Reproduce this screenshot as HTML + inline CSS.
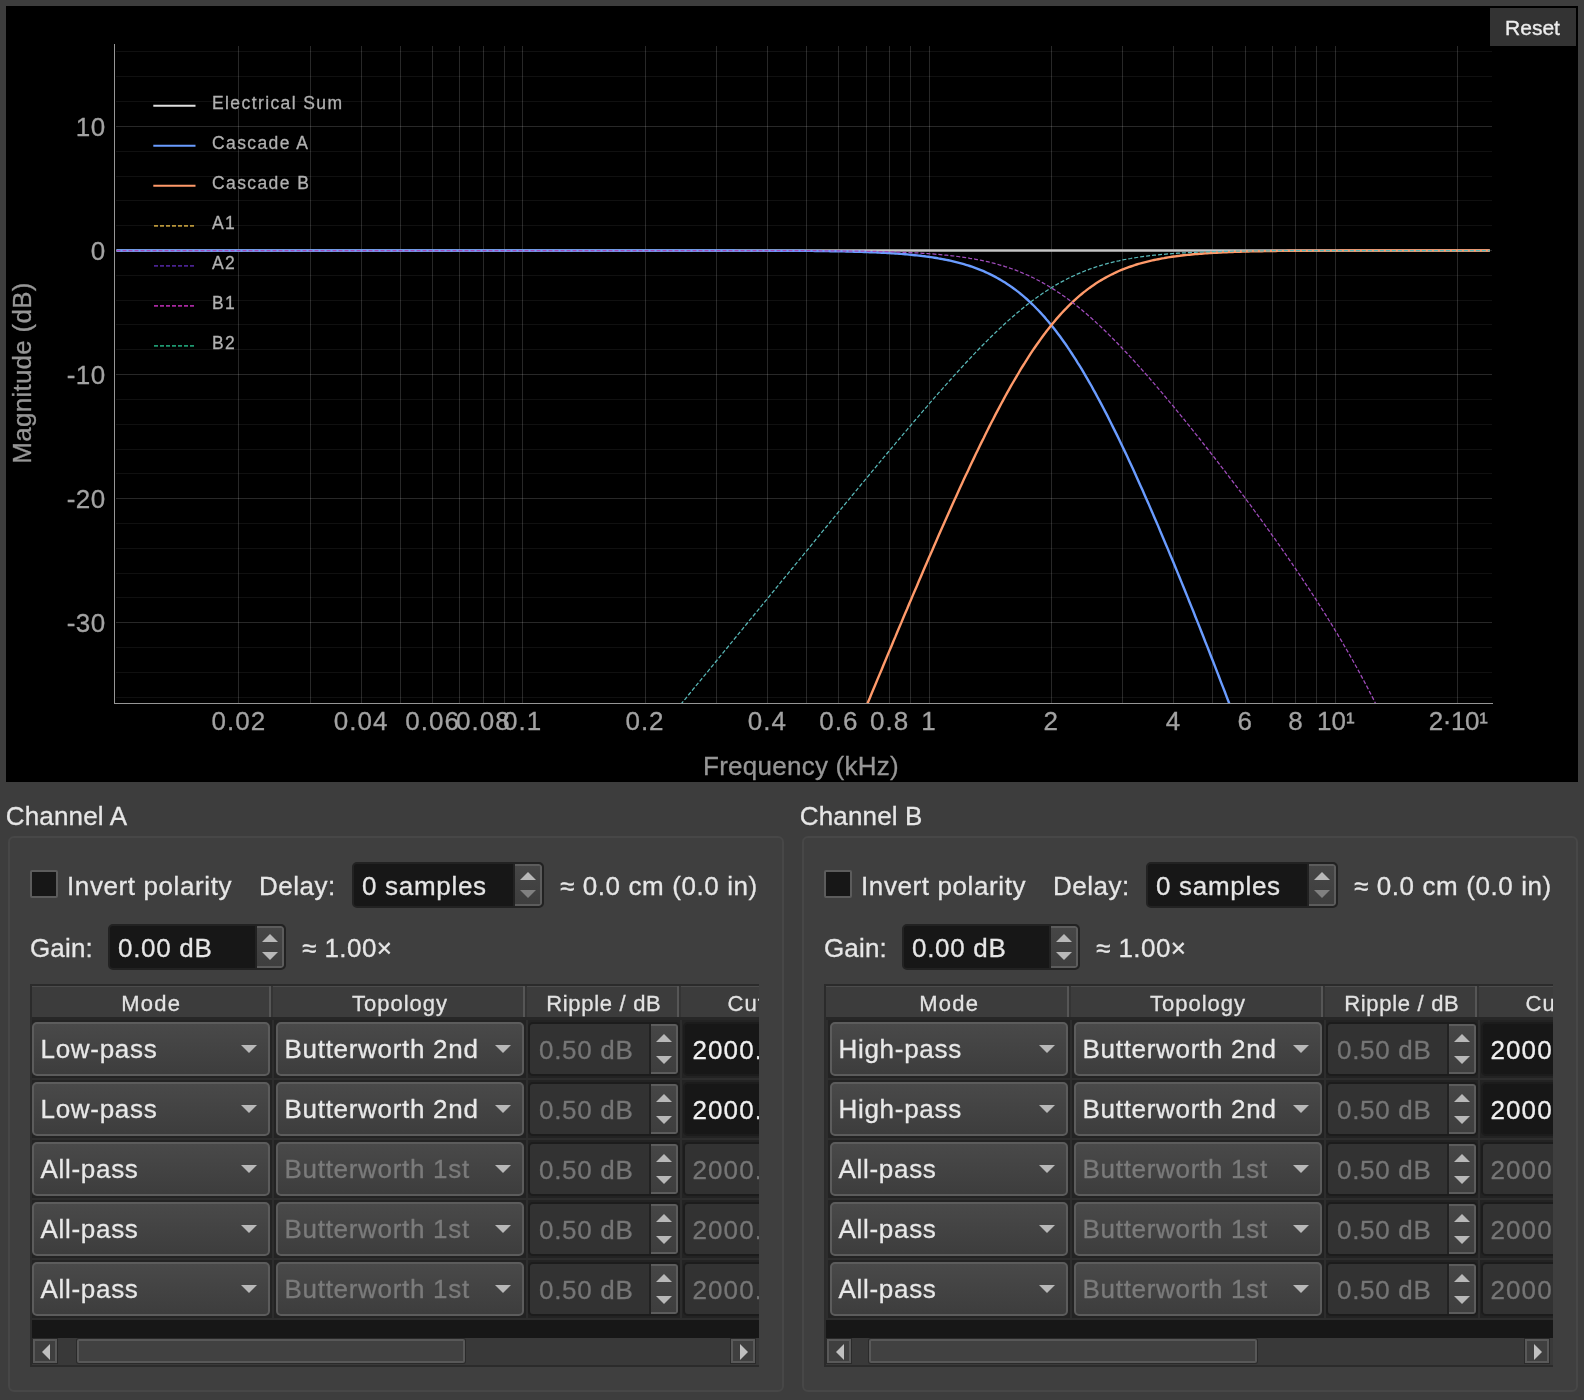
<!DOCTYPE html>
<html lang="en"><head><meta charset="utf-8"><title>Crossover</title>
<style>
*{box-sizing:border-box;margin:0;padding:0}
html,body{width:1584px;height:1400px;overflow:hidden;background:#3d3d3d}
body{position:relative;will-change:transform;font-family:"Liberation Sans",sans-serif;color:#e4e4e4;font-size:26px}
.plot{position:absolute;left:6px;top:6px}
.plot text{font-family:"Liberation Sans",sans-serif;stroke:currentColor;stroke-width:0.3px}
.tk{color:#a2a2a2}.al{color:#969696}.lg{color:#b0b0b0}
.tk{font-size:26px;fill:#a2a2a2;letter-spacing:0.4px}
.tkx{letter-spacing:1px}
.al{font-size:26px;fill:#969696;letter-spacing:0.25px}
.lg{font-size:17.5px;fill:#b0b0b0;letter-spacing:1.4px}
.reset{position:absolute;left:1490px;top:8px;width:86px;height:38px;background:#333;color:#ececec;font-size:21px;line-height:39px;text-align:center;text-indent:-1px;letter-spacing:0;-webkit-text-stroke:0.35px #ececec}
.gtitle{position:absolute;font-size:26px;line-height:30px;white-space:nowrap;color:#e6e6e6}
.gframe{position:absolute;border:2px solid #474747;border-radius:6px;background:#3f3f3f}
.lbl{position:absolute;font-size:26px;line-height:30px;white-space:nowrap;color:#e6e6e6;letter-spacing:0.45px}
.cb{position:absolute;width:28px;height:28px;background:#171717;border:2px solid #5c5c5c;border-radius:2px}
.spin{position:absolute;background:#171717;border:2px solid #222;border-radius:5px;overflow:hidden}
.spin .sv{position:absolute;top:2px;bottom:0;display:flex;align-items:center;white-space:nowrap;color:#e6e6e6;letter-spacing:0.7px}
.spin .sb{position:absolute;right:0;top:0;bottom:0;background:linear-gradient(#464646,#3e3e3e);border:2px solid #5c5c5c;border-left:none;border-radius:0 3px 3px 0;box-shadow:-2px 0 0 #222}
.spin .up,.spin .dn{position:absolute;left:5px;width:0;height:0;border-left:8px solid transparent;border-right:8px solid transparent}
.spin .up{border-bottom:8px solid #b8b8b8}
.spin .dn{border-top:8px solid #b8b8b8}
.spin.min .dn{border-top-color:#808080}
.spin.dis{background:#323232;border-color:#1c1c1c}
.spin.dis .sv{color:#767676}
.table{position:absolute;background:#232323;border:2px solid #2b2b2b;border-right:none;overflow:hidden}
.table>*{position:absolute}
.thead{left:0;top:0;right:0;height:34px;background:#3c3c3c;border-top:1.5px solid #4c4c4c;border-bottom:3px solid #272727}
.th{top:0;height:33px;line-height:36px;text-indent:0;text-align:center;font-size:22px;color:#e2e2e2;letter-spacing:1px;white-space:nowrap;overflow:hidden}
.thsep{top:0;width:2px;height:31px;background:#565656}
.thsep2{top:0;width:2px;height:31px;background:#343434}
.hl{left:0;right:0;height:2px;background:#2d2d2d}
.vl{top:34px;width:2px;height:300px;background:#2d2d2d}
.combo{background:linear-gradient(#494949,#3d3d3d);border:2px solid #5c5c5c;border-radius:5px}
.combo span{position:absolute;left:6.5px;top:1px;bottom:0;display:flex;align-items:center;white-space:nowrap;color:#e8e8e8;letter-spacing:0.7px}
.combo.dis span{color:#7b7b7b}
.combo .ar{position:absolute;right:11px;top:50%;margin-top:-4px;width:0;height:0;border-left:8px solid transparent;border-right:8px solid transparent;border-top:8px solid #b8b8b8}
.cut{background:#171717;border:2px solid #1c1c1c;border-radius:5px;overflow:hidden}
.cut span{position:absolute;left:7.5px;top:2px;bottom:0;display:flex;align-items:center;color:#f0f0f0;letter-spacing:1.1px;white-space:nowrap}
.cut.dis{background:#323232}
.cut.dis span{color:#767676}
.gtitle,.lbl,.sv,.combo span,.cut span,.th{-webkit-text-stroke:0.3px currentColor}
.dark{left:0;right:0;top:334px;height:18px;background:#171717}
.sbar{left:0;right:0;top:352px;height:27px;background:#393939}
.sbar>*{position:absolute}
.sbtn{top:1px;width:24px;height:24px;border:2px solid #595959;background:#3f3f3f;box-shadow:0 0 0 1px #2a2a2a}
.sbtn.l{left:1px}.sbtn.r{right:4px}
.sbtn i{position:absolute;top:3px;width:0;height:0;border-top:8px solid transparent;border-bottom:8px solid transparent}
.sbtn.l i{left:7px;border-right:8px solid #c0c0c0}
.sbtn.r i{left:7px;border-left:8px solid #c0c0c0}
.shandle{top:1px;height:24px;background:#414141;border:2px solid #585858;border-radius:2px;box-shadow:0 0 0 1px #2a2a2a}
</style></head>
<body>
<svg class="plot" width="1572" height="776" viewBox="6 6 1572 776">
<defs><clipPath id="vb"><rect x="115" y="45" width="1377" height="658"/></clipPath></defs>
<rect x="6" y="6" width="1572" height="776" fill="#000"/>
<g stroke="#fff" stroke-opacity="0.158" stroke-width="1"><line x1="238.5" x2="238.5" y1="46" y2="703"/><line x1="310.5" x2="310.5" y1="46" y2="703"/><line x1="361.5" x2="361.5" y1="46" y2="703"/><line x1="400.5" x2="400.5" y1="46" y2="703"/><line x1="432.5" x2="432.5" y1="46" y2="703"/><line x1="459.5" x2="459.5" y1="46" y2="703"/><line x1="483.5" x2="483.5" y1="46" y2="703"/><line x1="504.5" x2="504.5" y1="46" y2="703"/><line x1="522.5" x2="522.5" y1="46" y2="703"/><line x1="645.5" x2="645.5" y1="46" y2="703"/><line x1="716.5" x2="716.5" y1="46" y2="703"/><line x1="767.5" x2="767.5" y1="46" y2="703"/><line x1="806.5" x2="806.5" y1="46" y2="703"/><line x1="838.5" x2="838.5" y1="46" y2="703"/><line x1="866.5" x2="866.5" y1="46" y2="703"/><line x1="889.5" x2="889.5" y1="46" y2="703"/><line x1="910.5" x2="910.5" y1="46" y2="703"/><line x1="929.5" x2="929.5" y1="46" y2="703"/><line x1="1051.5" x2="1051.5" y1="46" y2="703"/><line x1="1122.5" x2="1122.5" y1="46" y2="703"/><line x1="1173.5" x2="1173.5" y1="46" y2="703"/><line x1="1212.5" x2="1212.5" y1="46" y2="703"/><line x1="1245.5" x2="1245.5" y1="46" y2="703"/><line x1="1272.5" x2="1272.5" y1="46" y2="703"/><line x1="1295.5" x2="1295.5" y1="46" y2="703"/><line x1="1316.5" x2="1316.5" y1="46" y2="703"/><line x1="1335.5" x2="1335.5" y1="46" y2="703"/><line x1="1457.5" x2="1457.5" y1="46" y2="703"/></g>
<g stroke="#fff" stroke-opacity="0.062" stroke-width="1"><line x1="116" x2="1492" y1="697.5" y2="697.5"/><line x1="116" x2="1492" y1="672.5" y2="672.5"/><line x1="116" x2="1492" y1="647.5" y2="647.5"/><line x1="116" x2="1492" y1="597.5" y2="597.5"/><line x1="116" x2="1492" y1="573.5" y2="573.5"/><line x1="116" x2="1492" y1="548.5" y2="548.5"/><line x1="116" x2="1492" y1="523.5" y2="523.5"/><line x1="116" x2="1492" y1="473.5" y2="473.5"/><line x1="116" x2="1492" y1="449.5" y2="449.5"/><line x1="116" x2="1492" y1="424.5" y2="424.5"/><line x1="116" x2="1492" y1="399.5" y2="399.5"/><line x1="116" x2="1492" y1="349.5" y2="349.5"/><line x1="116" x2="1492" y1="324.5" y2="324.5"/><line x1="116" x2="1492" y1="300.5" y2="300.5"/><line x1="116" x2="1492" y1="275.5" y2="275.5"/><line x1="116" x2="1492" y1="225.5" y2="225.5"/><line x1="116" x2="1492" y1="200.5" y2="200.5"/><line x1="116" x2="1492" y1="176.5" y2="176.5"/><line x1="116" x2="1492" y1="151.5" y2="151.5"/><line x1="116" x2="1492" y1="101.5" y2="101.5"/><line x1="116" x2="1492" y1="76.5" y2="76.5"/><line x1="116" x2="1492" y1="51.5" y2="51.5"/></g>
<g stroke="#fff" stroke-opacity="0.158" stroke-width="1"><line x1="116" x2="1492" y1="622.5" y2="622.5"/><line x1="116" x2="1492" y1="498.5" y2="498.5"/><line x1="116" x2="1492" y1="374.5" y2="374.5"/><line x1="116" x2="1492" y1="250.5" y2="250.5"/><line x1="116" x2="1492" y1="126.5" y2="126.5"/></g>
<g clip-path="url(#vb)" fill="none">
<path d="M116.5 250.6 L1489.8 250.6" stroke="#c4c4c4" stroke-width="2.5"/>
<path d="M116.5 250.5 L118.4 250.5 L120.4 250.5 L122.3 250.5 L124.3 250.5 L126.3 250.5 L128.2 250.5 L130.2 250.5 L132.2 250.5 L134.1 250.5 L136.1 250.5 L138.0 250.5 L140.0 250.5 L142.0 250.5 L143.9 250.5 L145.9 250.5 L147.8 250.5 L149.8 250.5 L151.8 250.5 L153.7 250.5 L155.7 250.5 L157.7 250.5 L159.6 250.5 L161.6 250.5 L163.5 250.5 L165.5 250.5 L167.5 250.5 L169.4 250.5 L171.4 250.5 L173.4 250.5 L175.3 250.5 L177.3 250.5 L179.2 250.5 L181.2 250.5 L183.2 250.5 L185.1 250.5 L187.1 250.5 L189.0 250.5 L191.0 250.5 L193.0 250.5 L194.9 250.5 L196.9 250.5 L198.9 250.5 L200.8 250.5 L202.8 250.5 L204.7 250.5 L206.7 250.5 L208.7 250.5 L210.6 250.5 L212.6 250.5 L214.5 250.5 L216.5 250.5 L218.5 250.5 L220.4 250.5 L222.4 250.5 L224.4 250.5 L226.3 250.5 L228.3 250.5 L230.2 250.5 L232.2 250.5 L234.2 250.5 L236.1 250.5 L238.1 250.5 L240.1 250.5 L242.0 250.5 L244.0 250.5 L245.9 250.5 L247.9 250.5 L249.9 250.5 L251.8 250.5 L253.8 250.5 L255.7 250.5 L257.7 250.5 L259.7 250.5 L261.6 250.5 L263.6 250.5 L265.6 250.5 L267.5 250.5 L269.5 250.5 L271.4 250.5 L273.4 250.5 L275.4 250.5 L277.3 250.5 L279.3 250.5 L281.2 250.5 L283.2 250.5 L285.2 250.5 L287.1 250.5 L289.1 250.5 L291.1 250.5 L293.0 250.5 L295.0 250.5 L296.9 250.5 L298.9 250.5 L300.9 250.5 L302.8 250.5 L304.8 250.5 L306.8 250.5 L308.7 250.5 L310.7 250.5 L312.6 250.5 L314.6 250.5 L316.6 250.5 L318.5 250.5 L320.5 250.5 L322.4 250.5 L324.4 250.5 L326.4 250.5 L328.3 250.5 L330.3 250.5 L332.3 250.5 L334.2 250.5 L336.2 250.5 L338.1 250.5 L340.1 250.5 L342.1 250.5 L344.0 250.5 L346.0 250.5 L347.9 250.5 L349.9 250.5 L351.9 250.5 L353.8 250.5 L355.8 250.5 L357.8 250.5 L359.7 250.5 L361.7 250.5 L363.6 250.5 L365.6 250.5 L367.6 250.5 L369.5 250.5 L371.5 250.5 L373.5 250.5 L375.4 250.5 L377.4 250.5 L379.3 250.5 L381.3 250.5 L383.3 250.5 L385.2 250.5 L387.2 250.5 L389.1 250.5 L391.1 250.5 L393.1 250.5 L395.0 250.5 L397.0 250.5 L399.0 250.5 L400.9 250.5 L402.9 250.5 L404.8 250.5 L406.8 250.5 L408.8 250.5 L410.7 250.5 L412.7 250.5 L414.6 250.5 L416.6 250.5 L418.6 250.5 L420.5 250.5 L422.5 250.5 L424.5 250.5 L426.4 250.5 L428.4 250.5 L430.3 250.5 L432.3 250.5 L434.3 250.5 L436.2 250.5 L438.2 250.5 L440.2 250.5 L442.1 250.5 L444.1 250.5 L446.0 250.5 L448.0 250.5 L450.0 250.5 L451.9 250.5 L453.9 250.5 L455.8 250.5 L457.8 250.5 L459.8 250.5 L461.7 250.5 L463.7 250.5 L465.7 250.5 L467.6 250.5 L469.6 250.5 L471.5 250.5 L473.5 250.5 L475.5 250.5 L477.4 250.5 L479.4 250.5 L481.3 250.5 L483.3 250.5 L485.3 250.5 L487.2 250.5 L489.2 250.5 L491.2 250.5 L493.1 250.5 L495.1 250.5 L497.0 250.5 L499.0 250.5 L501.0 250.5 L502.9 250.5 L504.9 250.5 L506.9 250.5 L508.8 250.5 L510.8 250.5 L512.7 250.5 L514.7 250.5 L516.7 250.5 L518.6 250.5 L520.6 250.5 L522.5 250.5 L524.5 250.5 L526.5 250.5 L528.4 250.5 L530.4 250.5 L532.4 250.5 L534.3 250.5 L536.3 250.5 L538.2 250.5 L540.2 250.5 L542.2 250.5 L544.1 250.5 L546.1 250.5 L548.0 250.5 L550.0 250.5 L552.0 250.5 L553.9 250.5 L555.9 250.5 L557.9 250.5 L559.8 250.5 L561.8 250.5 L563.7 250.5 L565.7 250.5 L567.7 250.5 L569.6 250.5 L571.6 250.5 L573.6 250.5 L575.5 250.5 L577.5 250.5 L579.4 250.5 L581.4 250.5 L583.4 250.5 L585.3 250.5 L587.3 250.5 L589.2 250.5 L591.2 250.5 L593.2 250.5 L595.1 250.5 L597.1 250.5 L599.1 250.5 L601.0 250.5 L603.0 250.5 L604.9 250.5 L606.9 250.5 L608.9 250.5 L610.8 250.5 L612.8 250.5 L614.7 250.5 L616.7 250.5 L618.7 250.5 L620.6 250.5 L622.6 250.5 L624.6 250.5 L626.5 250.5 L628.5 250.5 L630.4 250.5 L632.4 250.5 L634.4 250.5 L636.3 250.5 L638.3 250.5 L640.3 250.5 L642.2 250.5 L644.2 250.5 L646.1 250.5 L648.1 250.5 L650.1 250.5 L652.0 250.5 L654.0 250.5 L655.9 250.5 L657.9 250.5 L659.9 250.5 L661.8 250.5 L663.8 250.5 L665.8 250.5 L667.7 250.5 L669.7 250.5 L671.6 250.5 L673.6 250.5 L675.6 250.5 L677.5 250.5 L679.5 250.5 L681.4 250.5 L683.4 250.5 L685.4 250.5 L687.3 250.5 L689.3 250.5 L691.3 250.5 L693.2 250.5 L695.2 250.5 L697.1 250.5 L699.1 250.5 L701.1 250.5 L703.0 250.5 L705.0 250.5 L707.0 250.5 L708.9 250.5 L710.9 250.5 L712.8 250.5 L714.8 250.5 L716.8 250.5 L718.7 250.5 L720.7 250.5 L722.6 250.5 L724.6 250.5 L726.6 250.5 L728.5 250.5 L730.5 250.5 L732.5 250.5 L734.4 250.5 L736.4 250.6 L738.3 250.6 L740.3 250.6 L742.3 250.6 L744.2 250.6 L746.2 250.6 L748.1 250.6 L750.1 250.6 L752.1 250.6 L754.0 250.6 L756.0 250.6 L758.0 250.6 L759.9 250.6 L761.9 250.6 L763.8 250.6 L765.8 250.6 L767.8 250.6 L769.7 250.6 L771.7 250.7 L773.7 250.7 L775.6 250.7 L777.6 250.7 L779.5 250.7 L781.5 250.7 L783.5 250.7 L785.4 250.7 L787.4 250.7 L789.3 250.7 L791.3 250.8 L793.3 250.8 L795.2 250.8 L797.2 250.8 L799.2 250.8 L801.1 250.8 L803.1 250.8 L805.0 250.9 L807.0 250.9 L809.0 250.9 L810.9 250.9 L812.9 250.9 L814.8 251.0 L816.8 251.0 L818.8 251.0 L820.7 251.0 L822.7 251.1 L824.7 251.1 L826.6 251.1 L828.6 251.1 L830.5 251.2 L832.5 251.2 L834.5 251.2 L836.4 251.3 L838.4 251.3 L840.4 251.4 L842.3 251.4 L844.3 251.4 L846.2 251.5 L848.2 251.5 L850.2 251.6 L852.1 251.6 L854.1 251.7 L856.0 251.7 L858.0 251.8 L860.0 251.8 L861.9 251.9 L863.9 252.0 L865.9 252.0 L867.8 252.1 L869.8 252.2 L871.7 252.3 L873.7 252.3 L875.7 252.4 L877.6 252.5 L879.6 252.6 L881.6 252.7 L883.5 252.8 L885.5 252.9 L887.4 253.0 L889.4 253.1 L891.4 253.2 L893.3 253.4 L895.3 253.5 L897.2 253.6 L899.2 253.8 L901.2 253.9 L903.1 254.1 L905.1 254.2 L907.1 254.4 L909.0 254.6 L911.0 254.8 L912.9 255.0 L914.9 255.2 L916.9 255.4 L918.8 255.6 L920.8 255.8 L922.7 256.1 L924.7 256.3 L926.7 256.6 L928.6 256.8 L930.6 257.1 L932.6 257.4 L934.5 257.7 L936.5 258.0 L938.4 258.4 L940.4 258.7 L942.4 259.1 L944.3 259.5 L946.3 259.9 L948.3 260.3 L950.2 260.7 L952.2 261.1 L954.1 261.6 L956.1 262.1 L958.1 262.6 L960.0 263.1 L962.0 263.6 L963.9 264.2 L965.9 264.8 L967.9 265.4 L969.8 266.0 L971.8 266.7 L973.8 267.4 L975.7 268.1 L977.7 268.8 L979.6 269.6 L981.6 270.4 L983.6 271.2 L985.5 272.1 L987.5 273.0 L989.4 273.9 L991.4 274.9 L993.4 275.9 L995.3 276.9 L997.3 278.0 L999.3 279.1 L1001.2 280.2 L1003.2 281.4 L1005.1 282.6 L1007.1 283.9 L1009.1 285.2 L1011.0 286.6 L1013.0 288.0 L1015.0 289.4 L1016.9 290.9 L1018.9 292.4 L1020.8 294.0 L1022.8 295.6 L1024.8 297.3 L1026.7 299.0 L1028.7 300.8 L1030.6 302.7 L1032.6 304.5 L1034.6 306.5 L1036.5 308.5 L1038.5 310.5 L1040.5 312.6 L1042.4 314.7 L1044.4 316.9 L1046.3 319.2 L1048.3 321.5 L1050.3 323.9 L1052.2 326.3 L1054.2 328.8 L1056.1 331.3 L1058.1 333.9 L1060.1 336.5 L1062.0 339.2 L1064.0 342.0 L1066.0 344.8 L1067.9 347.7 L1069.9 350.6 L1071.8 353.5 L1073.8 356.6 L1075.8 359.6 L1077.7 362.8 L1079.7 365.9 L1081.7 369.2 L1083.6 372.4 L1085.6 375.8 L1087.5 379.1 L1089.5 382.6 L1091.5 386.0 L1093.4 389.6 L1095.4 393.1 L1097.3 396.7 L1099.3 400.4 L1101.3 404.1 L1103.2 407.8 L1105.2 411.6 L1107.2 415.4 L1109.1 419.3 L1111.1 423.2 L1113.0 427.1 L1115.0 431.1 L1117.0 435.1 L1118.9 439.1 L1120.9 443.2 L1122.8 447.3 L1124.8 451.4 L1126.8 455.6 L1128.7 459.8 L1130.7 464.1 L1132.7 468.3 L1134.6 472.6 L1136.6 476.9 L1138.5 481.3 L1140.5 485.7 L1142.5 490.1 L1144.4 494.5 L1146.4 499.0 L1148.4 503.4 L1150.3 507.9 L1152.3 512.4 L1154.2 517.0 L1156.2 521.6 L1158.2 526.1 L1160.1 530.8 L1162.1 535.4 L1164.0 540.0 L1166.0 544.7 L1168.0 549.4 L1169.9 554.1 L1171.9 558.8 L1173.9 563.5 L1175.8 568.3 L1177.8 573.1 L1179.7 577.8 L1181.7 582.6 L1183.7 587.5 L1185.6 592.3 L1187.6 597.1 L1189.5 602.0 L1191.5 606.9 L1193.5 611.8 L1195.4 616.7 L1197.4 621.6 L1199.4 626.6 L1201.3 631.5 L1203.3 636.5 L1205.2 641.5 L1207.2 646.4 L1209.2 651.5 L1211.1 656.5 L1213.1 661.5 L1215.1 666.6 L1217.0 671.6 L1219.0 676.7 L1220.9 681.8 L1222.9 686.9 L1224.9 692.0 L1226.8 697.1 L1228.8 702.3 L1230.7 707.4 L1232.7 712.6 L1234.7 717.8 L1236.6 723.0 L1238.6 728.2" stroke="#6a9cff" stroke-width="2.4"/>
<path d="M856.0 731.1 L858.0 726.4 L860.0 721.6 L861.9 716.9 L863.9 712.2 L865.9 707.4 L867.8 702.7 L869.8 698.0 L871.7 693.2 L873.7 688.5 L875.7 683.8 L877.6 679.1 L879.6 674.4 L881.6 669.7 L883.5 665.0 L885.5 660.3 L887.4 655.6 L889.4 650.9 L891.4 646.2 L893.3 641.5 L895.3 636.9 L897.2 632.2 L899.2 627.5 L901.2 622.9 L903.1 618.2 L905.1 613.6 L907.1 609.0 L909.0 604.3 L911.0 599.7 L912.9 595.1 L914.9 590.5 L916.9 585.9 L918.8 581.3 L920.8 576.7 L922.7 572.2 L924.7 567.6 L926.7 563.0 L928.6 558.5 L930.6 554.0 L932.6 549.5 L934.5 545.0 L936.5 540.5 L938.4 536.0 L940.4 531.5 L942.4 527.1 L944.3 522.7 L946.3 518.2 L948.3 513.8 L950.2 509.5 L952.2 505.1 L954.1 500.7 L956.1 496.4 L958.1 492.1 L960.0 487.8 L962.0 483.5 L963.9 479.3 L965.9 475.1 L967.9 470.9 L969.8 466.7 L971.8 462.5 L973.8 458.4 L975.7 454.3 L977.7 450.2 L979.6 446.2 L981.6 442.1 L983.6 438.2 L985.5 434.2 L987.5 430.3 L989.4 426.4 L991.4 422.5 L993.4 418.7 L995.3 414.9 L997.3 411.1 L999.3 407.4 L1001.2 403.7 L1003.2 400.1 L1005.1 396.5 L1007.1 392.9 L1009.1 389.4 L1011.0 385.9 L1013.0 382.5 L1015.0 379.1 L1016.9 375.8 L1018.9 372.5 L1020.8 369.2 L1022.8 366.0 L1024.8 362.9 L1026.7 359.8 L1028.7 356.7 L1030.6 353.7 L1032.6 350.7 L1034.6 347.8 L1036.5 345.0 L1038.5 342.2 L1040.5 339.4 L1042.4 336.7 L1044.4 334.1 L1046.3 331.5 L1048.3 329.0 L1050.3 326.5 L1052.2 324.1 L1054.2 321.7 L1056.1 319.4 L1058.1 317.1 L1060.1 314.9 L1062.0 312.8 L1064.0 310.6 L1066.0 308.6 L1067.9 306.6 L1069.9 304.6 L1071.8 302.8 L1073.8 300.9 L1075.8 299.1 L1077.7 297.4 L1079.7 295.7 L1081.7 294.0 L1083.6 292.4 L1085.6 290.9 L1087.5 289.4 L1089.5 287.9 L1091.5 286.5 L1093.4 285.2 L1095.4 283.8 L1097.3 282.6 L1099.3 281.3 L1101.3 280.1 L1103.2 279.0 L1105.2 277.9 L1107.2 276.8 L1109.1 275.7 L1111.1 274.7 L1113.0 273.8 L1115.0 272.8 L1117.0 271.9 L1118.9 271.0 L1120.9 270.2 L1122.8 269.4 L1124.8 268.6 L1126.8 267.9 L1128.7 267.2 L1130.7 266.5 L1132.7 265.8 L1134.6 265.2 L1136.6 264.5 L1138.5 263.9 L1140.5 263.4 L1142.5 262.8 L1144.4 262.3 L1146.4 261.8 L1148.4 261.3 L1150.3 260.8 L1152.3 260.4 L1154.2 260.0 L1156.2 259.6 L1158.2 259.2 L1160.1 258.8 L1162.1 258.4 L1164.0 258.1 L1166.0 257.7 L1168.0 257.4 L1169.9 257.1 L1171.9 256.8 L1173.9 256.5 L1175.8 256.3 L1177.8 256.0 L1179.7 255.8 L1181.7 255.5 L1183.7 255.3 L1185.6 255.1 L1187.6 254.9 L1189.5 254.7 L1191.5 254.5 L1193.5 254.3 L1195.4 254.1 L1197.4 254.0 L1199.4 253.8 L1201.3 253.7 L1203.3 253.5 L1205.2 253.4 L1207.2 253.2 L1209.2 253.1 L1211.1 253.0 L1213.1 252.9 L1215.1 252.8 L1217.0 252.7 L1219.0 252.6 L1220.9 252.5 L1222.9 252.4 L1224.9 252.3 L1226.8 252.2 L1228.8 252.1 L1230.7 252.0 L1232.7 252.0 L1234.7 251.9 L1236.6 251.8 L1238.6 251.8 L1240.6 251.7 L1242.5 251.6 L1244.5 251.6 L1246.4 251.5 L1248.4 251.5 L1250.4 251.4 L1252.3 251.4 L1254.3 251.3 L1256.2 251.3 L1258.2 251.3 L1260.2 251.2 L1262.1 251.2 L1264.1 251.1 L1266.1 251.1 L1268.0 251.1 L1270.0 251.1 L1271.9 251.0 L1273.9 251.0 L1275.9 251.0 L1277.8 250.9 L1279.8 250.9 L1281.8 250.9 L1283.7 250.9 L1285.7 250.9 L1287.6 250.8 L1289.6 250.8 L1291.6 250.8 L1293.5 250.8 L1295.5 250.8 L1297.4 250.7 L1299.4 250.7 L1301.4 250.7 L1303.3 250.7 L1305.3 250.7 L1307.3 250.7 L1309.2 250.7 L1311.2 250.7 L1313.1 250.6 L1315.1 250.6 L1317.1 250.6 L1319.0 250.6 L1321.0 250.6 L1322.9 250.6 L1324.9 250.6 L1326.9 250.6 L1328.8 250.6 L1330.8 250.6 L1332.8 250.6 L1334.7 250.6 L1336.7 250.6 L1338.6 250.6 L1340.6 250.5 L1342.6 250.5 L1344.5 250.5 L1346.5 250.5 L1348.5 250.5 L1350.4 250.5 L1352.4 250.5 L1354.3 250.5 L1356.3 250.5 L1358.3 250.5 L1360.2 250.5 L1362.2 250.5 L1364.1 250.5 L1366.1 250.5 L1368.1 250.5 L1370.0 250.5 L1372.0 250.5 L1374.0 250.5 L1375.9 250.5 L1377.9 250.5 L1379.8 250.5 L1381.8 250.5 L1383.8 250.5 L1385.7 250.5 L1387.7 250.5 L1389.6 250.5 L1391.6 250.5 L1393.6 250.5 L1395.5 250.5 L1397.5 250.5 L1399.5 250.5 L1401.4 250.5 L1403.4 250.5 L1405.3 250.5 L1407.3 250.5 L1409.3 250.5 L1411.2 250.5 L1413.2 250.5 L1415.2 250.5 L1417.1 250.5 L1419.1 250.5 L1421.0 250.5 L1423.0 250.5 L1425.0 250.5 L1426.9 250.5 L1428.9 250.5 L1430.8 250.5 L1432.8 250.5 L1434.8 250.5 L1436.7 250.5 L1438.7 250.5 L1440.7 250.5 L1442.6 250.5 L1444.6 250.5 L1446.5 250.5 L1448.5 250.5 L1450.5 250.5 L1452.4 250.5 L1454.4 250.5 L1456.3 250.5 L1458.3 250.5 L1460.3 250.5 L1462.2 250.5 L1464.2 250.5 L1466.2 250.5 L1468.1 250.5 L1470.1 250.5 L1472.0 250.5 L1474.0 250.5 L1476.0 250.5 L1477.9 250.5 L1479.9 250.5 L1481.9 250.5 L1483.8 250.5 L1485.8 250.5 L1487.7 250.5 L1489.7 250.5" stroke="#ff9a6a" stroke-width="2.4"/>
<path d="M116.5 250.5 L118.4 250.5 L120.4 250.5 L122.3 250.5 L124.3 250.5 L126.3 250.5 L128.2 250.5 L130.2 250.5 L132.2 250.5 L134.1 250.5 L136.1 250.5 L138.0 250.5 L140.0 250.5 L142.0 250.5 L143.9 250.5 L145.9 250.5 L147.8 250.5 L149.8 250.5 L151.8 250.5 L153.7 250.5 L155.7 250.5 L157.7 250.5 L159.6 250.5 L161.6 250.5 L163.5 250.5 L165.5 250.5 L167.5 250.5 L169.4 250.5 L171.4 250.5 L173.4 250.5 L175.3 250.5 L177.3 250.5 L179.2 250.5 L181.2 250.5 L183.2 250.5 L185.1 250.5 L187.1 250.5 L189.0 250.5 L191.0 250.5 L193.0 250.5 L194.9 250.5 L196.9 250.5 L198.9 250.5 L200.8 250.5 L202.8 250.5 L204.7 250.5 L206.7 250.5 L208.7 250.5 L210.6 250.5 L212.6 250.5 L214.5 250.5 L216.5 250.5 L218.5 250.5 L220.4 250.5 L222.4 250.5 L224.4 250.5 L226.3 250.5 L228.3 250.5 L230.2 250.5 L232.2 250.5 L234.2 250.5 L236.1 250.5 L238.1 250.5 L240.1 250.5 L242.0 250.5 L244.0 250.5 L245.9 250.5 L247.9 250.5 L249.9 250.5 L251.8 250.5 L253.8 250.5 L255.7 250.5 L257.7 250.5 L259.7 250.5 L261.6 250.5 L263.6 250.5 L265.6 250.5 L267.5 250.5 L269.5 250.5 L271.4 250.5 L273.4 250.5 L275.4 250.5 L277.3 250.5 L279.3 250.5 L281.2 250.5 L283.2 250.5 L285.2 250.5 L287.1 250.5 L289.1 250.5 L291.1 250.5 L293.0 250.5 L295.0 250.5 L296.9 250.5 L298.9 250.5 L300.9 250.5 L302.8 250.5 L304.8 250.5 L306.8 250.5 L308.7 250.5 L310.7 250.5 L312.6 250.5 L314.6 250.5 L316.6 250.5 L318.5 250.5 L320.5 250.5 L322.4 250.5 L324.4 250.5 L326.4 250.5 L328.3 250.5 L330.3 250.5 L332.3 250.5 L334.2 250.5 L336.2 250.5 L338.1 250.5 L340.1 250.5 L342.1 250.5 L344.0 250.5 L346.0 250.5 L347.9 250.5 L349.9 250.5 L351.9 250.5 L353.8 250.5 L355.8 250.5 L357.8 250.5 L359.7 250.5 L361.7 250.5 L363.6 250.5 L365.6 250.5 L367.6 250.5 L369.5 250.5 L371.5 250.5 L373.5 250.5 L375.4 250.5 L377.4 250.5 L379.3 250.5 L381.3 250.5 L383.3 250.5 L385.2 250.5 L387.2 250.5 L389.1 250.5 L391.1 250.5 L393.1 250.5 L395.0 250.5 L397.0 250.5 L399.0 250.5 L400.9 250.5 L402.9 250.5 L404.8 250.5 L406.8 250.5 L408.8 250.5 L410.7 250.5 L412.7 250.5 L414.6 250.5 L416.6 250.5 L418.6 250.5 L420.5 250.5 L422.5 250.5 L424.5 250.5 L426.4 250.5 L428.4 250.5 L430.3 250.5 L432.3 250.5 L434.3 250.5 L436.2 250.5 L438.2 250.5 L440.2 250.5 L442.1 250.5 L444.1 250.5 L446.0 250.5 L448.0 250.5 L450.0 250.5 L451.9 250.5 L453.9 250.5 L455.8 250.5 L457.8 250.5 L459.8 250.5 L461.7 250.5 L463.7 250.5 L465.7 250.5 L467.6 250.5 L469.6 250.5 L471.5 250.5 L473.5 250.5 L475.5 250.5 L477.4 250.5 L479.4 250.5 L481.3 250.5 L483.3 250.5 L485.3 250.5 L487.2 250.5 L489.2 250.5 L491.2 250.5 L493.1 250.5 L495.1 250.5 L497.0 250.5 L499.0 250.5 L501.0 250.5 L502.9 250.5 L504.9 250.5 L506.9 250.5 L508.8 250.5 L510.8 250.5 L512.7 250.5 L514.7 250.5 L516.7 250.5 L518.6 250.5 L520.6 250.5 L522.5 250.5 L524.5 250.5 L526.5 250.5 L528.4 250.5 L530.4 250.5 L532.4 250.5 L534.3 250.5 L536.3 250.5 L538.2 250.5 L540.2 250.5 L542.2 250.5 L544.1 250.5 L546.1 250.5 L548.0 250.5 L550.0 250.5 L552.0 250.5 L553.9 250.5 L555.9 250.5 L557.9 250.5 L559.8 250.5 L561.8 250.5 L563.7 250.5 L565.7 250.5 L567.7 250.5 L569.6 250.5 L571.6 250.5 L573.6 250.5 L575.5 250.5 L577.5 250.5 L579.4 250.5 L581.4 250.5 L583.4 250.5 L585.3 250.5 L587.3 250.5 L589.2 250.5 L591.2 250.5 L593.2 250.5 L595.1 250.5 L597.1 250.5 L599.1 250.5 L601.0 250.5 L603.0 250.5 L604.9 250.5 L606.9 250.5 L608.9 250.5 L610.8 250.5 L612.8 250.5 L614.7 250.5 L616.7 250.5 L618.7 250.5 L620.6 250.5 L622.6 250.5 L624.6 250.5 L626.5 250.5 L628.5 250.5 L630.4 250.5 L632.4 250.5 L634.4 250.5 L636.3 250.5 L638.3 250.5 L640.3 250.5 L642.2 250.5 L644.2 250.5 L646.1 250.5 L648.1 250.5 L650.1 250.5 L652.0 250.5 L654.0 250.5 L655.9 250.5 L657.9 250.5 L659.9 250.5 L661.8 250.5 L663.8 250.5 L665.8 250.5 L667.7 250.5 L669.7 250.5 L671.6 250.5 L673.6 250.5 L675.6 250.5 L677.5 250.5 L679.5 250.5 L681.4 250.5 L683.4 250.5 L685.4 250.5 L687.3 250.5 L689.3 250.5 L691.3 250.5 L693.2 250.5 L695.2 250.5 L697.1 250.5 L699.1 250.5 L701.1 250.5 L703.0 250.5 L705.0 250.5 L707.0 250.5 L708.9 250.5 L710.9 250.5 L712.8 250.5 L714.8 250.5 L716.8 250.5 L718.7 250.5 L720.7 250.5 L722.6 250.5 L724.6 250.5 L726.6 250.5 L728.5 250.5 L730.5 250.5 L732.5 250.5 L734.4 250.5 L736.4 250.5 L738.3 250.5 L740.3 250.5 L742.3 250.5 L744.2 250.5 L746.2 250.5 L748.1 250.5 L750.1 250.5 L752.1 250.5 L754.0 250.5 L756.0 250.5 L758.0 250.5 L759.9 250.5 L761.9 250.5 L763.8 250.5 L765.8 250.6 L767.8 250.6 L769.7 250.6 L771.7 250.6 L773.7 250.6 L775.6 250.6 L777.6 250.6 L779.5 250.6 L781.5 250.6 L783.5 250.6 L785.4 250.6 L787.4 250.6 L789.3 250.6 L791.3 250.6 L793.3 250.6 L795.2 250.6 L797.2 250.6 L799.2 250.6 L801.1 250.7 L803.1 250.7 L805.0 250.7 L807.0 250.7 L809.0 250.7 L810.9 250.7 L812.9 250.7 L814.8 250.7 L816.8 250.7 L818.8 250.7 L820.7 250.8 L822.7 250.8 L824.7 250.8 L826.6 250.8 L828.6 250.8 L830.5 250.8 L832.5 250.8 L834.5 250.9 L836.4 250.9 L838.4 250.9 L840.4 250.9 L842.3 250.9 L844.3 251.0 L846.2 251.0 L848.2 251.0 L850.2 251.0 L852.1 251.0 L854.1 251.1 L856.0 251.1 L858.0 251.1 L860.0 251.2 L861.9 251.2 L863.9 251.2 L865.9 251.3 L867.8 251.3 L869.8 251.3 L871.7 251.4 L873.7 251.4 L875.7 251.4 L877.6 251.5 L879.6 251.5 L881.6 251.6 L883.5 251.6 L885.5 251.7 L887.4 251.7 L889.4 251.8 L891.4 251.9 L893.3 251.9 L895.3 252.0 L897.2 252.1 L899.2 252.1 L901.2 252.2 L903.1 252.3 L905.1 252.4 L907.1 252.4 L909.0 252.5 L911.0 252.6 L912.9 252.7 L914.9 252.8 L916.9 252.9 L918.8 253.0 L920.8 253.1 L922.7 253.3 L924.7 253.4 L926.7 253.5 L928.6 253.7 L930.6 253.8 L932.6 253.9 L934.5 254.1 L936.5 254.3 L938.4 254.4 L940.4 254.6 L942.4 254.8 L944.3 255.0 L946.3 255.2 L948.3 255.4 L950.2 255.6 L952.2 255.8 L954.1 256.0 L956.1 256.3 L958.1 256.5 L960.0 256.8 L962.0 257.1 L963.9 257.3 L965.9 257.6 L967.9 257.9 L969.8 258.3 L971.8 258.6 L973.8 258.9 L975.7 259.3 L977.7 259.7 L979.6 260.0 L981.6 260.4 L983.6 260.9 L985.5 261.3 L987.5 261.7 L989.4 262.2 L991.4 262.7 L993.4 263.2 L995.3 263.7 L997.3 264.2 L999.3 264.8 L1001.2 265.3 L1003.2 265.9 L1005.1 266.6 L1007.1 267.2 L1009.1 267.8 L1011.0 268.5 L1013.0 269.2 L1015.0 269.9 L1016.9 270.7 L1018.9 271.4 L1020.8 272.2 L1022.8 273.1 L1024.8 273.9 L1026.7 274.8 L1028.7 275.6 L1030.6 276.6 L1032.6 277.5 L1034.6 278.5 L1036.5 279.5 L1038.5 280.5 L1040.5 281.5 L1042.4 282.6 L1044.4 283.7 L1046.3 284.8 L1048.3 286.0 L1050.3 287.2 L1052.2 288.4 L1054.2 289.6 L1056.1 290.9 L1058.1 292.2 L1060.1 293.5 L1062.0 294.9 L1064.0 296.2 L1066.0 297.6 L1067.9 299.1 L1069.9 300.5 L1071.8 302.0 L1073.8 303.5 L1075.8 305.1 L1077.7 306.6 L1079.7 308.2 L1081.7 309.8 L1083.6 311.5 L1085.6 313.1 L1087.5 314.8 L1089.5 316.5 L1091.5 318.3 L1093.4 320.0 L1095.4 321.8 L1097.3 323.6 L1099.3 325.4 L1101.3 327.3 L1103.2 329.1 L1105.2 331.0 L1107.2 332.9 L1109.1 334.9 L1111.1 336.8 L1113.0 338.8 L1115.0 340.8 L1117.0 342.8 L1118.9 344.8 L1120.9 346.8 L1122.8 348.9 L1124.8 351.0 L1126.8 353.0 L1128.7 355.1 L1130.7 357.3 L1132.7 359.4 L1134.6 361.5 L1136.6 363.7 L1138.5 365.9 L1140.5 368.1 L1142.5 370.3 L1144.4 372.5 L1146.4 374.7 L1148.4 376.9 L1150.3 379.2 L1152.3 381.5 L1154.2 383.7 L1156.2 386.0 L1158.2 388.3 L1160.1 390.6 L1162.1 392.9 L1164.0 395.2 L1166.0 397.6 L1168.0 399.9 L1169.9 402.3 L1171.9 404.6 L1173.9 407.0 L1175.8 409.4 L1177.8 411.8 L1179.7 414.2 L1181.7 416.6 L1183.7 419.0 L1185.6 421.4 L1187.6 423.8 L1189.5 426.2 L1191.5 428.7 L1193.5 431.1 L1195.4 433.6 L1197.4 436.0 L1199.4 438.5 L1201.3 441.0 L1203.3 443.5 L1205.2 446.0 L1207.2 448.5 L1209.2 451.0 L1211.1 453.5 L1213.1 456.0 L1215.1 458.5 L1217.0 461.0 L1219.0 463.6 L1220.9 466.1 L1222.9 468.7 L1224.9 471.2 L1226.8 473.8 L1228.8 476.4 L1230.7 478.9 L1232.7 481.5 L1234.7 484.1 L1236.6 486.7 L1238.6 489.3 L1240.6 491.9 L1242.5 494.6 L1244.5 497.2 L1246.4 499.8 L1248.4 502.5 L1250.4 505.1 L1252.3 507.8 L1254.3 510.5 L1256.2 513.1 L1258.2 515.8 L1260.2 518.5 L1262.1 521.2 L1264.1 523.9 L1266.1 526.6 L1268.0 529.4 L1270.0 532.1 L1271.9 534.9 L1273.9 537.6 L1275.9 540.4 L1277.8 543.2 L1279.8 545.9 L1281.8 548.7 L1283.7 551.6 L1285.7 554.4 L1287.6 557.2 L1289.6 560.1 L1291.6 562.9 L1293.5 565.8 L1295.5 568.7 L1297.4 571.5 L1299.4 574.5 L1301.4 577.4 L1303.3 580.3 L1305.3 583.3 L1307.3 586.2 L1309.2 589.2 L1311.2 592.2 L1313.1 595.2 L1315.1 598.2 L1317.1 601.3 L1319.0 604.4 L1321.0 607.4 L1322.9 610.5 L1324.9 613.7 L1326.9 616.8 L1328.8 620.0 L1330.8 623.1 L1332.8 626.3 L1334.7 629.6 L1336.7 632.8 L1338.6 636.1 L1340.6 639.4 L1342.6 642.7 L1344.5 646.1 L1346.5 649.5 L1348.5 652.9 L1350.4 656.3 L1352.4 659.8 L1354.3 663.3 L1356.3 666.8 L1358.3 670.4 L1360.2 674.0 L1362.2 677.6 L1364.1 681.3 L1366.1 685.0 L1368.1 688.8 L1370.0 692.6 L1372.0 696.4 L1374.0 700.3 L1375.9 704.2 L1377.9 708.2 L1379.8 712.2 L1381.8 716.3 L1383.8 720.5 L1385.7 724.7 L1387.7 729.0" stroke="#a04cbc" stroke-width="1.25" stroke-dasharray="4 2"/>
<path d="M657.9 732.4 L659.9 730.0 L661.8 727.6 L663.8 725.2 L665.8 722.8 L667.7 720.4 L669.7 718.0 L671.6 715.6 L673.6 713.2 L675.6 710.8 L677.5 708.4 L679.5 706.0 L681.4 703.6 L683.4 701.2 L685.4 698.8 L687.3 696.4 L689.3 694.0 L691.3 691.6 L693.2 689.2 L695.2 686.8 L697.1 684.4 L699.1 682.0 L701.1 679.6 L703.0 677.3 L705.0 674.9 L707.0 672.5 L708.9 670.1 L710.9 667.7 L712.8 665.3 L714.8 662.9 L716.8 660.5 L718.7 658.1 L720.7 655.7 L722.6 653.3 L724.6 650.9 L726.6 648.5 L728.5 646.1 L730.5 643.7 L732.5 641.3 L734.4 638.9 L736.4 636.5 L738.3 634.1 L740.3 631.7 L742.3 629.3 L744.2 626.9 L746.2 624.5 L748.1 622.1 L750.1 619.7 L752.1 617.4 L754.0 615.0 L756.0 612.6 L758.0 610.2 L759.9 607.8 L761.9 605.4 L763.8 603.0 L765.8 600.6 L767.8 598.2 L769.7 595.8 L771.7 593.4 L773.7 591.0 L775.6 588.6 L777.6 586.2 L779.5 583.8 L781.5 581.4 L783.5 579.0 L785.4 576.7 L787.4 574.3 L789.3 571.9 L791.3 569.5 L793.3 567.1 L795.2 564.7 L797.2 562.3 L799.2 559.9 L801.1 557.5 L803.1 555.1 L805.0 552.7 L807.0 550.3 L809.0 548.0 L810.9 545.6 L812.9 543.2 L814.8 540.8 L816.8 538.4 L818.8 536.0 L820.7 533.6 L822.7 531.2 L824.7 528.9 L826.6 526.5 L828.6 524.1 L830.5 521.7 L832.5 519.3 L834.5 516.9 L836.4 514.6 L838.4 512.2 L840.4 509.8 L842.3 507.4 L844.3 505.0 L846.2 502.7 L848.2 500.3 L850.2 497.9 L852.1 495.5 L854.1 493.2 L856.0 490.8 L858.0 488.4 L860.0 486.0 L861.9 483.7 L863.9 481.3 L865.9 478.9 L867.8 476.6 L869.8 474.2 L871.7 471.9 L873.7 469.5 L875.7 467.1 L877.6 464.8 L879.6 462.4 L881.6 460.1 L883.5 457.7 L885.5 455.4 L887.4 453.0 L889.4 450.7 L891.4 448.3 L893.3 446.0 L895.3 443.7 L897.2 441.3 L899.2 439.0 L901.2 436.7 L903.1 434.3 L905.1 432.0 L907.1 429.7 L909.0 427.4 L911.0 425.1 L912.9 422.8 L914.9 420.5 L916.9 418.2 L918.8 415.9 L920.8 413.6 L922.7 411.3 L924.7 409.0 L926.7 406.8 L928.6 404.5 L930.6 402.2 L932.6 400.0 L934.5 397.7 L936.5 395.5 L938.4 393.2 L940.4 391.0 L942.4 388.8 L944.3 386.6 L946.3 384.4 L948.3 382.2 L950.2 380.0 L952.2 377.8 L954.1 375.6 L956.1 373.4 L958.1 371.3 L960.0 369.1 L962.0 367.0 L963.9 364.9 L965.9 362.8 L967.9 360.7 L969.8 358.6 L971.8 356.5 L973.8 354.4 L975.7 352.4 L977.7 350.3 L979.6 348.3 L981.6 346.3 L983.6 344.3 L985.5 342.3 L987.5 340.4 L989.4 338.4 L991.4 336.5 L993.4 334.6 L995.3 332.7 L997.3 330.8 L999.3 328.9 L1001.2 327.1 L1003.2 325.3 L1005.1 323.5 L1007.1 321.7 L1009.1 319.9 L1011.0 318.2 L1013.0 316.5 L1015.0 314.8 L1016.9 313.1 L1018.9 311.5 L1020.8 309.8 L1022.8 308.2 L1024.8 306.7 L1026.7 305.1 L1028.7 303.6 L1030.6 302.1 L1032.6 300.6 L1034.6 299.2 L1036.5 297.7 L1038.5 296.3 L1040.5 295.0 L1042.4 293.6 L1044.4 292.3 L1046.3 291.0 L1048.3 289.7 L1050.3 288.5 L1052.2 287.3 L1054.2 286.1 L1056.1 284.9 L1058.1 283.8 L1060.1 282.7 L1062.0 281.6 L1064.0 280.6 L1066.0 279.5 L1067.9 278.5 L1069.9 277.6 L1071.8 276.6 L1073.8 275.7 L1075.8 274.8 L1077.7 273.9 L1079.7 273.1 L1081.7 272.3 L1083.6 271.5 L1085.6 270.7 L1087.5 269.9 L1089.5 269.2 L1091.5 268.5 L1093.4 267.8 L1095.4 267.2 L1097.3 266.5 L1099.3 265.9 L1101.3 265.3 L1103.2 264.7 L1105.2 264.2 L1107.2 263.6 L1109.1 263.1 L1111.1 262.6 L1113.0 262.1 L1115.0 261.6 L1117.0 261.2 L1118.9 260.8 L1120.9 260.3 L1122.8 259.9 L1124.8 259.5 L1126.8 259.2 L1128.7 258.8 L1130.7 258.5 L1132.7 258.1 L1134.6 257.8 L1136.6 257.5 L1138.5 257.2 L1140.5 256.9 L1142.5 256.6 L1144.4 256.4 L1146.4 256.1 L1148.4 255.9 L1150.3 255.7 L1152.3 255.4 L1154.2 255.2 L1156.2 255.0 L1158.2 254.8 L1160.1 254.6 L1162.1 254.4 L1164.0 254.3 L1166.0 254.1 L1168.0 253.9 L1169.9 253.8 L1171.9 253.6 L1173.9 253.5 L1175.8 253.4 L1177.8 253.2 L1179.7 253.1 L1181.7 253.0 L1183.7 252.9 L1185.6 252.8 L1187.6 252.7 L1189.5 252.6 L1191.5 252.5 L1193.5 252.4 L1195.4 252.3 L1197.4 252.2 L1199.4 252.1 L1201.3 252.1 L1203.3 252.0 L1205.2 251.9 L1207.2 251.9 L1209.2 251.8 L1211.1 251.7 L1213.1 251.7 L1215.1 251.6 L1217.0 251.6 L1219.0 251.5 L1220.9 251.5 L1222.9 251.4 L1224.9 251.4 L1226.8 251.3 L1228.8 251.3 L1230.7 251.3 L1232.7 251.2 L1234.7 251.2 L1236.6 251.1 L1238.6 251.1 L1240.6 251.1 L1242.5 251.1 L1244.5 251.0 L1246.4 251.0 L1248.4 251.0 L1250.4 251.0 L1252.3 250.9 L1254.3 250.9 L1256.2 250.9 L1258.2 250.9 L1260.2 250.8 L1262.1 250.8 L1264.1 250.8 L1266.1 250.8 L1268.0 250.8 L1270.0 250.8 L1271.9 250.7 L1273.9 250.7 L1275.9 250.7 L1277.8 250.7 L1279.8 250.7 L1281.8 250.7 L1283.7 250.7 L1285.7 250.7 L1287.6 250.7 L1289.6 250.6 L1291.6 250.6 L1293.5 250.6 L1295.5 250.6 L1297.4 250.6 L1299.4 250.6 L1301.4 250.6 L1303.3 250.6 L1305.3 250.6 L1307.3 250.6 L1309.2 250.6 L1311.2 250.6 L1313.1 250.6 L1315.1 250.6 L1317.1 250.6 L1319.0 250.5 L1321.0 250.5 L1322.9 250.5 L1324.9 250.5 L1326.9 250.5 L1328.8 250.5 L1330.8 250.5 L1332.8 250.5 L1334.7 250.5 L1336.7 250.5 L1338.6 250.5 L1340.6 250.5 L1342.6 250.5 L1344.5 250.5 L1346.5 250.5 L1348.5 250.5 L1350.4 250.5 L1352.4 250.5 L1354.3 250.5 L1356.3 250.5 L1358.3 250.5 L1360.2 250.5 L1362.2 250.5 L1364.1 250.5 L1366.1 250.5 L1368.1 250.5 L1370.0 250.5 L1372.0 250.5 L1374.0 250.5 L1375.9 250.5 L1377.9 250.5 L1379.8 250.5 L1381.8 250.5 L1383.8 250.5 L1385.7 250.5 L1387.7 250.5 L1389.6 250.5 L1391.6 250.5 L1393.6 250.5 L1395.5 250.5 L1397.5 250.5 L1399.5 250.5 L1401.4 250.5 L1403.4 250.5 L1405.3 250.5 L1407.3 250.5 L1409.3 250.5 L1411.2 250.5 L1413.2 250.5 L1415.2 250.5 L1417.1 250.5 L1419.1 250.5 L1421.0 250.5 L1423.0 250.5 L1425.0 250.5 L1426.9 250.5 L1428.9 250.5 L1430.8 250.5 L1432.8 250.5 L1434.8 250.5 L1436.7 250.5 L1438.7 250.5 L1440.7 250.5 L1442.6 250.5 L1444.6 250.5 L1446.5 250.5 L1448.5 250.5 L1450.5 250.5 L1452.4 250.5 L1454.4 250.5 L1456.3 250.5 L1458.3 250.5 L1460.3 250.5 L1462.2 250.5 L1464.2 250.5 L1466.2 250.5 L1468.1 250.5 L1470.1 250.5 L1472.0 250.5 L1474.0 250.5 L1476.0 250.5 L1477.9 250.5 L1479.9 250.5 L1481.9 250.5 L1483.8 250.5 L1485.8 250.5 L1487.7 250.5 L1489.7 250.5" stroke="#58b8b8" stroke-width="1.25" stroke-dasharray="4 2"/>
</g>
<line x1="114.5" x2="114.5" y1="44" y2="703.5" stroke="#969696" stroke-width="1"/>
<line x1="114" x2="1493" y1="703.5" y2="703.5" stroke="#969696" stroke-width="1"/>
<text class="tk" x="105.5" y="135.8" text-anchor="end">10</text>
<text class="tk" x="105.5" y="259.9" text-anchor="end">0</text>
<text class="tk" x="105.5" y="384.0" text-anchor="end">-10</text>
<text class="tk" x="105.5" y="508.1" text-anchor="end">-20</text>
<text class="tk" x="105.5" y="632.2" text-anchor="end">-30</text>
<text class="tk tkx" x="238.8" y="730.4" text-anchor="middle">0.02</text>
<text class="tk tkx" x="361.1" y="730.4" text-anchor="middle">0.04</text>
<text class="tk tkx" x="432.6" y="730.4" text-anchor="middle">0.06</text>
<text class="tk tkx" x="483.4" y="730.4" text-anchor="middle">0.08</text>
<text class="tk tkx" x="522.7" y="730.4" text-anchor="middle">0.1</text>
<text class="tk tkx" x="645.0" y="730.4" text-anchor="middle">0.2</text>
<text class="tk tkx" x="767.3" y="730.4" text-anchor="middle">0.4</text>
<text class="tk tkx" x="838.9" y="730.4" text-anchor="middle">0.6</text>
<text class="tk tkx" x="889.6" y="730.4" text-anchor="middle">0.8</text>
<text class="tk tkx" x="929.0" y="730.4" text-anchor="middle">1</text>
<text class="tk tkx" x="1051.3" y="730.4" text-anchor="middle">2</text>
<text class="tk tkx" x="1173.6" y="730.4" text-anchor="middle">4</text>
<text class="tk tkx" x="1245.2" y="730.4" text-anchor="middle">6</text>
<text class="tk tkx" x="1295.9" y="730.4" text-anchor="middle">8</text>
<text class="tk" x="1335.8" y="730.4" text-anchor="middle" style="letter-spacing:0">10¹</text>
<text class="tk" x="1458.1" y="730.4" text-anchor="middle" style="letter-spacing:-0.4px">2·10¹</text>
<text class="al" x="801" y="775" text-anchor="middle">Frequency (kHz)</text>
<text class="al" transform="translate(31.2,373) rotate(-90)" text-anchor="middle">Magnitude (dB)</text>
<line x1="153.3" x2="195.5" y1="105.8" y2="105.8" stroke="#e0e0e0" stroke-width="2"/>
<text class="lg" x="212" y="109.0">Electrical Sum</text>
<line x1="153.3" x2="195.5" y1="145.8" y2="145.8" stroke="#6a9cff" stroke-width="2"/>
<text class="lg" x="212" y="149.0">Cascade A</text>
<line x1="153.3" x2="195.5" y1="185.8" y2="185.8" stroke="#ff9a6a" stroke-width="2"/>
<text class="lg" x="212" y="189.0">Cascade B</text>
<line x1="154" x2="194" y1="225.8" y2="225.8" stroke="#b8953a" stroke-width="1.8" stroke-dasharray="4 2"/>
<text class="lg" x="212" y="229.0">A1</text>
<line x1="154" x2="194" y1="265.8" y2="265.8" stroke="#4a2290" stroke-width="1.8" stroke-dasharray="4 2"/>
<text class="lg" x="212" y="269.0">A2</text>
<line x1="154" x2="194" y1="305.8" y2="305.8" stroke="#a828a0" stroke-width="1.8" stroke-dasharray="4 2"/>
<text class="lg" x="212" y="309.0">B1</text>
<line x1="154" x2="194" y1="345.8" y2="345.8" stroke="#1e9870" stroke-width="1.8" stroke-dasharray="4 2"/>
<text class="lg" x="212" y="349.0">B2</text>
</svg>
<div class="reset">Reset</div>
<div class="gtitle" style="left:5.8px;top:801px;letter-spacing:0.15px">Channel A</div>
<div class="gframe" style="left:8px;top:836px;width:776px;height:556px"></div>
<div class="cb" style="left:30px;top:870px"></div>
<div class="lbl" style="left:67px;top:871px;letter-spacing:0.6px">Invert polarity</div>
<div class="lbl" style="left:259px;top:871px;letter-spacing:0.5px">Delay:</div>
<div class="spin min" style="left:352px;top:862px;width:192px;height:46px"><span class="sv" style="left:8px">0 samples</span><span class="sb" style="width:27px"><i class="up" style="top:6px"></i><i class="dn" style="top:24px"></i></span></div>

<div class="lbl" style="left:560px;top:871px;letter-spacing:0.6px">≈ 0.0 cm (0.0 in)</div>
<div class="lbl" style="left:30px;top:933px;letter-spacing:0.15px">Gain:</div>
<div class="spin " style="left:108px;top:924px;width:178px;height:46px"><span class="sv" style="left:8px">0.00 dB</span><span class="sb" style="width:27px"><i class="up" style="top:6px"></i><i class="dn" style="top:24px"></i></span></div>

<div class="lbl" style="left:302px;top:933px">≈ 1.00×</div>
<div class="table" style="left:30px;top:984px;width:729px;height:383px"><div class="thead"></div><div class="th" style="left:0.3px;width:238px;letter-spacing:1.3px">Mode</div><div class="thsep" style="left:237px"></div><div class="thsep2" style="left:239px"></div><div class="th" style="left:242px;width:252px;letter-spacing:1px">Topology</div><div class="thsep" style="left:491px"></div><div class="thsep2" style="left:493px"></div><div class="th" style="left:495.8px;width:152px;letter-spacing:0.7px">Ripple / dB</div><div class="thsep" style="left:645px"></div><div class="thsep2" style="left:647px"></div><div class="th" style="left:695.6px;width:200px;text-align:left">Cutoff / Hz</div><div class="combo" style="left:0px;top:36px;width:238px;height:54px"><span>Low-pass</span><i class="ar"></i></div><div class="combo" style="left:244px;top:36px;width:248px;height:54px"><span>Butterworth 2nd</span><i class="ar"></i></div><div class="spin dis" style="left:496px;top:36px;width:152px;height:54px"><span class="sv" style="left:9px">0.50 dB</span><span class="sb" style="width:27px"><i class="up" style="top:8px"></i><i class="dn" style="top:30px"></i></span></div>
<div class="cut" style="left:651px;top:36px;width:160px;height:54px"><span>2000.00 Hz</span></div><div class="hl" style="top:92px"></div><div class="combo" style="left:0px;top:96px;width:238px;height:54px"><span>Low-pass</span><i class="ar"></i></div><div class="combo" style="left:244px;top:96px;width:248px;height:54px"><span>Butterworth 2nd</span><i class="ar"></i></div><div class="spin dis" style="left:496px;top:96px;width:152px;height:54px"><span class="sv" style="left:9px">0.50 dB</span><span class="sb" style="width:27px"><i class="up" style="top:8px"></i><i class="dn" style="top:30px"></i></span></div>
<div class="cut" style="left:651px;top:96px;width:160px;height:54px"><span>2000.00 Hz</span></div><div class="hl" style="top:152px"></div><div class="combo" style="left:0px;top:156px;width:238px;height:54px"><span>All-pass</span><i class="ar"></i></div><div class="combo dis" style="left:244px;top:156px;width:248px;height:54px"><span>Butterworth 1st</span><i class="ar"></i></div><div class="spin dis" style="left:496px;top:156px;width:152px;height:54px"><span class="sv" style="left:9px">0.50 dB</span><span class="sb" style="width:27px"><i class="up" style="top:8px"></i><i class="dn" style="top:30px"></i></span></div>
<div class="cut dis" style="left:651px;top:156px;width:160px;height:54px"><span>2000.00 Hz</span></div><div class="hl" style="top:212px"></div><div class="combo" style="left:0px;top:216px;width:238px;height:54px"><span>All-pass</span><i class="ar"></i></div><div class="combo dis" style="left:244px;top:216px;width:248px;height:54px"><span>Butterworth 1st</span><i class="ar"></i></div><div class="spin dis" style="left:496px;top:216px;width:152px;height:54px"><span class="sv" style="left:9px">0.50 dB</span><span class="sb" style="width:27px"><i class="up" style="top:8px"></i><i class="dn" style="top:30px"></i></span></div>
<div class="cut dis" style="left:651px;top:216px;width:160px;height:54px"><span>2000.00 Hz</span></div><div class="hl" style="top:272px"></div><div class="combo" style="left:0px;top:276px;width:238px;height:54px"><span>All-pass</span><i class="ar"></i></div><div class="combo dis" style="left:244px;top:276px;width:248px;height:54px"><span>Butterworth 1st</span><i class="ar"></i></div><div class="spin dis" style="left:496px;top:276px;width:152px;height:54px"><span class="sv" style="left:9px">0.50 dB</span><span class="sb" style="width:27px"><i class="up" style="top:8px"></i><i class="dn" style="top:30px"></i></span></div>
<div class="cut dis" style="left:651px;top:276px;width:160px;height:54px"><span>2000.00 Hz</span></div><div class="hl" style="top:332px"></div><div class="vl" style="left:240px"></div><div class="vl" style="left:494px"></div><div class="vl" style="left:648px"></div><div class="dark"></div><div class="sbar"><div class="sbtn l"><i></i></div><div class="shandle" style="left:45px;width:388px"></div><div class="sbtn r"><i></i></div></div></div>
<div class="gtitle" style="left:799.8px;top:801px;letter-spacing:0.15px">Channel B</div>
<div class="gframe" style="left:802px;top:836px;width:776px;height:556px"></div>
<div class="cb" style="left:824px;top:870px"></div>
<div class="lbl" style="left:861px;top:871px;letter-spacing:0.6px">Invert polarity</div>
<div class="lbl" style="left:1053px;top:871px;letter-spacing:0.5px">Delay:</div>
<div class="spin min" style="left:1146px;top:862px;width:192px;height:46px"><span class="sv" style="left:8px">0 samples</span><span class="sb" style="width:27px"><i class="up" style="top:6px"></i><i class="dn" style="top:24px"></i></span></div>

<div class="lbl" style="left:1354px;top:871px;letter-spacing:0.6px">≈ 0.0 cm (0.0 in)</div>
<div class="lbl" style="left:824px;top:933px;letter-spacing:0.15px">Gain:</div>
<div class="spin " style="left:902px;top:924px;width:178px;height:46px"><span class="sv" style="left:8px">0.00 dB</span><span class="sb" style="width:27px"><i class="up" style="top:6px"></i><i class="dn" style="top:24px"></i></span></div>

<div class="lbl" style="left:1096px;top:933px">≈ 1.00×</div>
<div class="table" style="left:824px;top:984px;width:729px;height:383px"><div class="thead"></div><div class="th" style="left:4.3px;width:238px;letter-spacing:1.3px">Mode</div><div class="thsep" style="left:241px"></div><div class="thsep2" style="left:243px"></div><div class="th" style="left:246px;width:252px;letter-spacing:1px">Topology</div><div class="thsep" style="left:495px"></div><div class="thsep2" style="left:497px"></div><div class="th" style="left:499.8px;width:152px;letter-spacing:0.7px">Ripple / dB</div><div class="thsep" style="left:649px"></div><div class="thsep2" style="left:651px"></div><div class="th" style="left:699.6px;width:200px;text-align:left">Cutoff / Hz</div><div class="combo" style="left:4px;top:36px;width:238px;height:54px"><span>High-pass</span><i class="ar"></i></div><div class="combo" style="left:248px;top:36px;width:248px;height:54px"><span>Butterworth 2nd</span><i class="ar"></i></div><div class="spin dis" style="left:500px;top:36px;width:152px;height:54px"><span class="sv" style="left:9px">0.50 dB</span><span class="sb" style="width:27px"><i class="up" style="top:8px"></i><i class="dn" style="top:30px"></i></span></div>
<div class="cut" style="left:655px;top:36px;width:160px;height:54px"><span>2000.00 Hz</span></div><div class="hl" style="top:92px"></div><div class="combo" style="left:4px;top:96px;width:238px;height:54px"><span>High-pass</span><i class="ar"></i></div><div class="combo" style="left:248px;top:96px;width:248px;height:54px"><span>Butterworth 2nd</span><i class="ar"></i></div><div class="spin dis" style="left:500px;top:96px;width:152px;height:54px"><span class="sv" style="left:9px">0.50 dB</span><span class="sb" style="width:27px"><i class="up" style="top:8px"></i><i class="dn" style="top:30px"></i></span></div>
<div class="cut" style="left:655px;top:96px;width:160px;height:54px"><span>2000.00 Hz</span></div><div class="hl" style="top:152px"></div><div class="combo" style="left:4px;top:156px;width:238px;height:54px"><span>All-pass</span><i class="ar"></i></div><div class="combo dis" style="left:248px;top:156px;width:248px;height:54px"><span>Butterworth 1st</span><i class="ar"></i></div><div class="spin dis" style="left:500px;top:156px;width:152px;height:54px"><span class="sv" style="left:9px">0.50 dB</span><span class="sb" style="width:27px"><i class="up" style="top:8px"></i><i class="dn" style="top:30px"></i></span></div>
<div class="cut dis" style="left:655px;top:156px;width:160px;height:54px"><span>2000.00 Hz</span></div><div class="hl" style="top:212px"></div><div class="combo" style="left:4px;top:216px;width:238px;height:54px"><span>All-pass</span><i class="ar"></i></div><div class="combo dis" style="left:248px;top:216px;width:248px;height:54px"><span>Butterworth 1st</span><i class="ar"></i></div><div class="spin dis" style="left:500px;top:216px;width:152px;height:54px"><span class="sv" style="left:9px">0.50 dB</span><span class="sb" style="width:27px"><i class="up" style="top:8px"></i><i class="dn" style="top:30px"></i></span></div>
<div class="cut dis" style="left:655px;top:216px;width:160px;height:54px"><span>2000.00 Hz</span></div><div class="hl" style="top:272px"></div><div class="combo" style="left:4px;top:276px;width:238px;height:54px"><span>All-pass</span><i class="ar"></i></div><div class="combo dis" style="left:248px;top:276px;width:248px;height:54px"><span>Butterworth 1st</span><i class="ar"></i></div><div class="spin dis" style="left:500px;top:276px;width:152px;height:54px"><span class="sv" style="left:9px">0.50 dB</span><span class="sb" style="width:27px"><i class="up" style="top:8px"></i><i class="dn" style="top:30px"></i></span></div>
<div class="cut dis" style="left:655px;top:276px;width:160px;height:54px"><span>2000.00 Hz</span></div><div class="hl" style="top:332px"></div><div class="vl" style="left:0px"></div><div class="vl" style="left:244px"></div><div class="vl" style="left:498px"></div><div class="vl" style="left:652px"></div><div class="dark"></div><div class="sbar"><div class="sbtn l"><i></i></div><div class="shandle" style="left:43px;width:388px"></div><div class="sbtn r"><i></i></div></div></div>
</body></html>
